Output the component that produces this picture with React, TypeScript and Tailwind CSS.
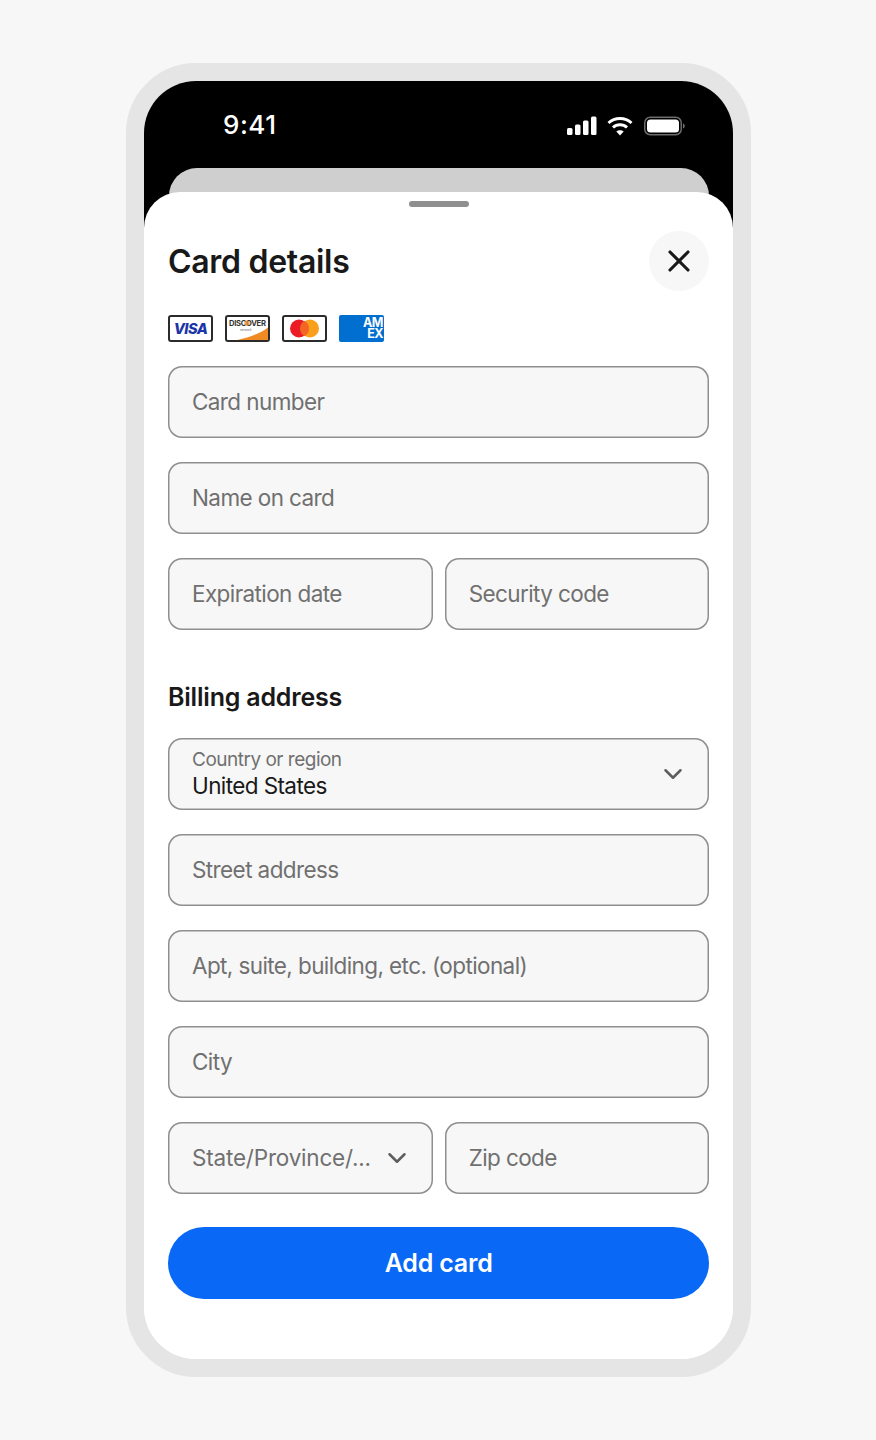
import { type ReactNode } from "react";
import { ChevronDown, X } from "lucide-react";

const font = { fontFamily: "Inter, 'Liberation Sans', sans-serif" };

function Field({ label }: { label: string }) {
  return (
    <div className="flex h-[72px] min-w-0 items-center rounded-[14px] bg-[#f7f7f7] pl-[24px] text-[22.5px] tracking-[-0.6px] text-[#707070] shadow-[inset_0_0_0_1.5px_#8f8f8f]">
      {label}
    </div>
  );
}

function StatusIcons() {
  return (
    <div className="flex items-center">
      <svg width="30" height="20" viewBox="0 0 30 20" fill="#fff">
        <rect x="0" y="12" width="5.5" height="7" rx="1.5" />
        <rect x="8" y="8.5" width="5.5" height="10.5" rx="1.5" />
        <rect x="16" y="4.5" width="5.5" height="14.5" rx="1.5" />
        <rect x="24" y="0.5" width="5.5" height="18.5" rx="1.5" />
      </svg>
      <svg className="ml-[10px]" width="26" height="20" viewBox="0 0 26 20" fill="none" stroke="#fff" strokeWidth="3">
        <path d="M1.5 7C7.8 1 18.2 1 24.5 7" />
        <path d="M6 11.5C9.8 7.9 16.2 7.9 20 11.5" />
        <path d="M13 19.5L9.3 15.5C11.3 13.7 14.7 13.7 16.7 15.5Z" fill="#fff" stroke="none" />
      </svg>
      <svg className="ml-[11px]" width="41" height="20" viewBox="0 0 41 20" fill="none">
        <rect x="0.75" y="1.25" width="36.5" height="17.5" rx="5.5" stroke="#6b6b6b" strokeWidth="1.5" />
        <rect x="3" y="3.5" width="32" height="13" rx="3.5" fill="#fff" />
        <path d="M39 7.5C40.2 8 40.8 9 40.8 10S40.2 12 39 12.5Z" fill="#6b6b6b" />
      </svg>
    </div>
  );
}

function CardBox({ children }: { children: ReactNode }) {
  return (
    <div className="h-[27px] w-[45px] overflow-hidden rounded-[3px] border-2 border-[#2b2b2b] bg-white">
      {children}
    </div>
  );
}

function CardLogos() {
  return (
    <div className="mt-[24px] flex gap-[12px]">
      <CardBox>
        <svg className="h-full w-full" viewBox="0 0 41 23">
          <text x="20.5" y="17" textAnchor="middle" fontSize="14.5" fontWeight="800" fontStyle="italic" fill="#1a35a8" fontFamily="Inter, sans-serif" letterSpacing="-0.5">VISA</text>
        </svg>
      </CardBox>
      <CardBox>
        <svg className="h-full w-full" viewBox="0 0 41 23">
          <path d="M10.5 23C22 20.5 33 16.5 41 10.5V23Z" fill="#f08a24" />
          <text x="2" y="8.5" fontSize="7.6" fontWeight="700" fill="#333" fontFamily="Inter, sans-serif" letterSpacing="-0.3">DISCOVER</text>
          <circle cx="20" cy="6" r="2.6" fill="#f08a24" opacity="0.75" />
          <text x="13" y="13.5" fontSize="3" fill="#666" fontFamily="Inter, sans-serif">network</text>
        </svg>
      </CardBox>
      <CardBox>
        <svg className="h-full w-full" viewBox="0 0 41 23">
          <circle cx="15" cy="11.5" r="9" fill="#eb1c26" />
          <circle cx="26" cy="11.5" r="9" fill="#f99f1c" />
          <path d="M20.5 3.7a9 9 0 0 1 0 15.6a9 9 0 0 1 0-15.6Z" fill="#f26522" />
        </svg>
      </CardBox>
      <div className="flex h-[27px] w-[45px] items-center justify-end overflow-hidden rounded-[2px] bg-[#016fd0] pr-px">
        <div className="w-[22px] text-right text-[12.5px] leading-[10.5px] font-bold tracking-[-0.5px] text-white">AM EX</div>
      </div>
    </div>
  );
}

export default function App() {
  return (
    <div className="h-[1440px] w-[876px] bg-[#f7f7f7] pt-[63px] pl-[126px]" style={font}>
      <div className="flex h-[1314px] w-[625.25px] flex-col overflow-hidden rounded-[70px] border-[18px] border-[#e5e5e5] bg-white">
        <div className="h-[149px] shrink-0 bg-black">
          <div className="flex h-[87px] items-start justify-between pt-[28px] pr-[48px] pl-[79px]">
            <span className="text-[26px] leading-[32px] font-medium tracking-[0.5px] text-white">9:41</span>
            <div className="pt-[7px]">
              <StatusIcons />
            </div>
          </div>
          <div className="mr-[24px] ml-[25px] h-[30px] rounded-t-[28px] bg-[#cfcfcf]" />
        </div>

        <div className="relative z-10 -mt-[38px] flex-1 rounded-t-[36px] bg-white px-[24px] pt-[9px]">
          <div className="mx-auto h-[6px] w-[60px] rounded-full bg-[#8f8f8f]" />

          <div className="mt-[24px] flex h-[60px] items-center justify-between">
            <h1 className="pt-[2px] text-[32px] font-semibold tracking-[-0.3px] text-[#191919]">Card details</h1>
            <button className="flex h-[60px] w-[60px] items-center justify-center rounded-full bg-[#f7f7f7] text-[#191919]">
              <X size={36} strokeWidth={2.1} />
            </button>
          </div>

          <CardLogos />

          <div className="mt-[24px] flex flex-col gap-[24px]">
            <Field label="Card number" />
            <Field label="Name on card" />
            <div className="grid grid-cols-2 gap-[12px]">
              <Field label="Expiration date" />
              <Field label="Security code" />
            </div>
          </div>

          <h2 className="mt-[51px] text-[25px] leading-[32px] font-semibold tracking-[-0.2px] text-[#191919]">Billing address</h2>

          <div className="mt-[25px] flex flex-col gap-[24px]">
            <div className="flex h-[72px] items-center justify-between rounded-[14px] bg-[#f7f7f7] pr-[21px] pl-[24px] shadow-[inset_0_0_0_1.5px_#8f8f8f]">
              <div className="flex flex-col pb-[2px]">
                <span className="text-[19px] leading-[26px] tracking-[-0.5px] text-[#707070]">Country or region</span>
                <span className="-mt-px text-[22.5px] leading-[28px] tracking-[-0.6px] text-[#191919]">United States</span>
              </div>
              <ChevronDown size={30} strokeWidth={2} className="text-[#5e5e5e]" />
            </div>
            <Field label="Street address" />
            <Field label="Apt, suite, building, etc. (optional)" />
            <Field label="City" />
            <div className="grid grid-cols-2 gap-[12px]">
              <div className="flex h-[72px] min-w-0 items-center justify-between rounded-[14px] bg-[#f7f7f7] pr-[21px] pl-[24px] text-[22.5px] tracking-[-0.2px] text-[#707070] shadow-[inset_0_0_0_1.5px_#8f8f8f]">
                <span>State/Province/...</span>
                <ChevronDown size={30} strokeWidth={2} className="text-[#5e5e5e]" />
              </div>
              <Field label="Zip code" />
            </div>
          </div>

          <button className="mt-[33px] h-[72px] w-full rounded-full bg-[#0968f6] pt-[2px] text-[25px] font-semibold tracking-[-0.2px] text-white">
            Add card
          </button>
        </div>
      </div>
    </div>
  );
}
